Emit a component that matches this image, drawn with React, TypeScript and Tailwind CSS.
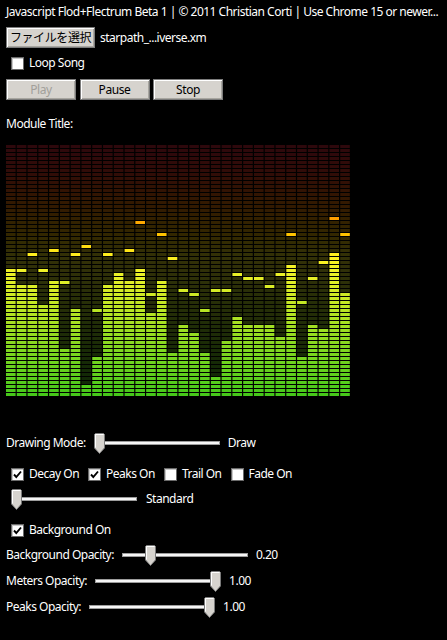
import React from "react";

const LEVELS = [31, 27, 27, 22, 28, 11, 21, 2, 9, 27, 30, 28, 31, 20, 28, 10, 17, 15, 10, 4, 13, 19, 17, 17, 17, 14, 32, 9, 17, 16, 35, 25];
const PEAKS = [31, 31, 35, 31, 36, 28, 35, 37, 21, 35, 30, 36, 43, 25, 40, 34, 26, 25, 21, 26, 26, 30, 29, 29, 27, 30, 40, 23, 29, 33, 44, 40];

const STOPS: [number, number[]][] = [
  [0, [70, 200, 26]],
  [12, [132, 216, 32]],
  [22, [190, 230, 36]],
  [31, [240, 242, 40]],
  [35, [255, 238, 30]],
  [40, [255, 196, 0]],
  [44, [255, 160, 0]],
  [50, [255, 104, 10]],
  [56, [245, 60, 40]],
  [62, [230, 40, 60]],
];

function rowColor(r: number, f: number): string {
  let a = STOPS[0];
  let b = STOPS[STOPS.length - 1];
  for (let i = 0; i < STOPS.length - 1; i++) {
    if (r >= STOPS[i][0] && r <= STOPS[i + 1][0]) {
      a = STOPS[i];
      b = STOPS[i + 1];
      break;
    }
  }
  const t = b[0] === a[0] ? 0 : (r - a[0]) / (b[0] - a[0]);
  const c = a[1].map((v, i) => Math.round((v + (b[1][i] - v) * t) * f));
  return `rgb(${c[0]},${c[1]},${c[2]})`;
}

function Spectrum() {
  const pitch = 345 / 32;
  const rects: React.ReactNode[] = [];
  for (let i = 0; i < 32; i++) {
    for (let r = 0; r < 63; r++) {
      const lit = r <= LEVELS[i] || r === PEAKS[i];
      rects.push(
        <rect
          key={`${i}-${r}`}
          x={i * pitch}
          y={249 - 4 * r}
          width={9.6}
          height={3}
          fill={rowColor(r, lit ? 1 : 0.2)}
        />
      );
    }
  }
  return (
    <svg width={345} height={252} viewBox="0 0 345 252" className="block">
      <rect x={0} y={0} width={345} height={252} fill="#000" />
      {rects}
    </svg>
  );
}

function Checkbox({ checked }: { checked?: boolean }) {
  return (
    <span className="w-[13px] h-[13px] bg-white border border-[#6a6a6a] shadow-[inset_1px_1px_0_#c8c8c8] flex items-center justify-center shrink-0">
      {checked && (
        <svg width="11" height="11" viewBox="0 0 11 11">
          <path d="M2 5.5 L4.3 8 L9 2.5" stroke="#000" strokeWidth="1.9" fill="none" />
        </svg>
      )}
    </span>
  );
}

function Slider({ thumb }: { thumb: string }) {
  return (
    <div className="relative w-[126px] h-[21px] shrink-0">
      <div className="absolute left-0 right-0 top-[8px] h-[4px] bg-[#f6f6f6] border border-[#9c9c9c]" />
      <svg width="11" height="21" viewBox="0 0 11 21" className={`absolute top-0 ${thumb}`}>
        <polygon points="0.5,1.5 1.5,0.5 9.5,0.5 10.5,1.5 10.5,15 5.5,20.5 0.5,15" fill="#d6d3ce" stroke="#7a7a7a" strokeWidth="1" />
        <polyline points="1.5,14.5 1.5,1.5 9.5,1.5" fill="none" stroke="#ffffff" strokeWidth="1" />
      </svg>
    </div>
  );
}

function Btn({ children, disabled, w }: { children: React.ReactNode; disabled?: boolean; w: string }) {
  return (
    <button
      className={`h-[21px] ${w} bg-[#d6d3ce] border border-[#7c7c7c] shadow-[inset_1px_1px_0_#ffffff,inset_-1px_-1px_0_#a8a6a0] text-[12px] leading-[16px] tracking-[-0.4px] flex items-center justify-center ${disabled ? "text-[#a2a09a]" : "text-black"}`}
    >
      {children}
    </button>
  );
}

export default function App() {
  return (
    <div className="w-[447px] h-[640px] bg-black text-white font-['Noto_Sans','Noto_Sans_CJK_JP',sans-serif] text-[12px] leading-[16px] pl-[6px] pt-[4px] overflow-hidden tracking-[-0.5px]">
      <div className="h-[16px] whitespace-nowrap tracking-[-0.5px]">
        Javascript Flod+Flectrum Beta 1 | © 2011 Christian Corti | Use Chrome 15 or newer...
      </div>

      <div className="mt-[7px] flex items-center gap-[5px] h-[21px]">
        <Btn w="w-[89px]">ファイルを選択</Btn>
        <span>starpath_...iverse.xm</span>
      </div>

      <div className="mt-[7px] h-[16px] flex items-center gap-[5px] pl-[5px]">
        <Checkbox />
        <span>Loop Song</span>
      </div>

      <div className="mt-[8px] flex gap-[3.5px] h-[21px]">
        <Btn w="w-[70px]" disabled>
          Play
        </Btn>
        <Btn w="w-[70px]">Pause</Btn>
        <Btn w="w-[70px]">Stop</Btn>
      </div>

      <div className="mt-[16px] h-[16px]">Module Title:</div>

      <div className="mt-[12px]">
        <Spectrum />
      </div>

      <div className="mt-[36px] h-[22px] flex items-center gap-[8px]">
        <span>Drawing Mode:</span>
        <Slider thumb="left-0" />
        <span>Draw</span>
      </div>

      <div className="mt-[12px] h-[16px] flex items-center pl-[5px]">
        <Checkbox checked />
        <span className="ml-[5px]">Decay On</span>
        <span className="ml-[9px]">
          <Checkbox checked />
        </span>
        <span className="ml-[5px]">Peaks On</span>
        <span className="ml-[9px]">
          <Checkbox />
        </span>
        <span className="ml-[5px]">Trail On</span>
        <span className="ml-[9px]">
          <Checkbox />
        </span>
        <span className="ml-[5px]">Fade On</span>
      </div>

      <div className="mt-[6px] h-[22px] flex items-center gap-[9px] pl-[5px]">
        <Slider thumb="left-0" />
        <span>Standard</span>
      </div>

      <div className="mt-[12px] h-[16px] flex items-center gap-[5px] pl-[5px]">
        <Checkbox checked />
        <span>Background On</span>
      </div>

      <div className="mt-[6px] h-[22px] flex items-center gap-[8px]">
        <span>Background Opacity:</span>
        <Slider thumb="left-[23px]" />
        <span>0.20</span>
      </div>

      <div className="mt-[4px] h-[22px] flex items-center gap-[8px]">
        <span>Meters Opacity:</span>
        <Slider thumb="left-[115px]" />
        <span>1.00</span>
      </div>

      <div className="mt-[4px] h-[22px] flex items-center gap-[8px]">
        <span>Peaks Opacity:</span>
        <Slider thumb="left-[115px]" />
        <span>1.00</span>
      </div>
    </div>
  );
}
